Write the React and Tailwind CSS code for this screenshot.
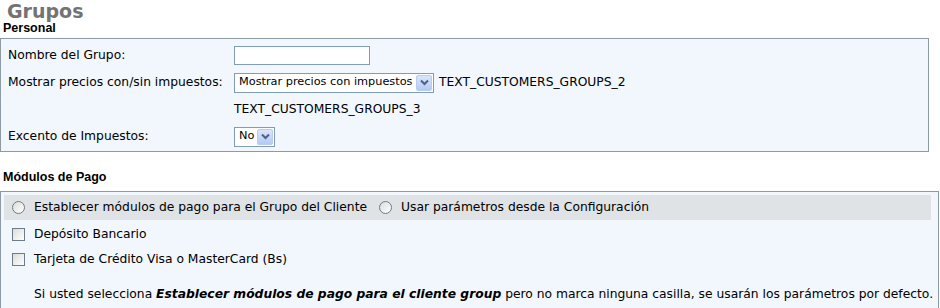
import React from "react";

function XpSelect({ value, width }) {
  return (
    <div
      className={`flex h-[20px] items-stretch border border-[#7f9db9] bg-white text-[11.3px] ${width}`}
    >
      <span className="flex flex-1 items-center pl-[4px] whitespace-nowrap">{value}</span>
      <span className="m-[1px] flex w-[16px] items-center justify-center rounded-[2px] border border-[#b9cbf0] bg-gradient-to-b from-[#dbe5fb] to-[#b5c9f5]">
        <svg width="9" height="7" viewBox="0 0 9 7">
          <path d="M1 1.5 L4.5 5 L8 1.5" fill="none" stroke="#4d6185" strokeWidth="2" />
        </svg>
      </span>
    </div>
  );
}

function Radio() {
  return (
    <span className="inline-block h-[13px] w-[13px] shrink-0 rounded-full border border-[#6b7c8c] bg-gradient-to-br from-[#dcdcd7] to-white" />
  );
}

function Check() {
  return (
    <span className="inline-block h-[13px] w-[13px] shrink-0 border border-[#6b7c8c] bg-gradient-to-br from-[#dcdcd7] to-white" />
  );
}

export default function App() {
  return (
    <div className="h-[308px] w-[940px] overflow-hidden bg-white text-[12.3px] text-black [font-family:'DejaVu_Sans',Verdana,sans-serif]">
      <h1 className="h-[21px] pt-[1px] pl-[7px] text-[19px] leading-[20px] font-bold text-[#737373]">Grupos</h1>
      <div className="h-[17px] pl-[3px] text-[12.5px] leading-[14px] font-bold [font-family:'Liberation_Sans',Arial,sans-serif]">
        Personal
      </div>

      <div className="w-[929px] border border-[#8b9aa4] bg-[#f1f7fd] pt-[3px] pb-[1px]">
        <div className="flex h-[27px] items-center">
          <span className="w-[233px] pl-[7px]">Nombre del Grupo:</span>
          <span className="h-[19px] w-[136px] border border-[#7f9db9] bg-white" />
        </div>
        <div className="flex h-[27px] items-center">
          <span className="w-[233px] pl-[7px] whitespace-nowrap">Mostrar precios con/sin impuestos:</span>
          <XpSelect value="Mostrar precios con impuestos" width="w-[200px]" />
          <span className="pl-[5px]">TEXT_CUSTOMERS_GROUPS_2</span>
        </div>
        <div className="flex h-[27px] items-center">
          <span className="w-[233px]" />
          <span>TEXT_CUSTOMERS_GROUPS_3</span>
        </div>
        <div className="flex h-[27px] items-center">
          <span className="w-[233px] pl-[7px]">Excento de Impuestos:</span>
          <XpSelect value="No" width="w-[41px]" />
        </div>
      </div>

      <div className="flex h-[39px] items-end pb-[4px] pl-[3px] text-[12.5px] font-bold [font-family:'Liberation_Sans',Arial,sans-serif]">
        Módulos de Pago
      </div>

      <div className="h-[130px] w-[939px] border border-[#8b9aa4] bg-[#f1f7fd] pt-[3px] pr-[7px] pl-[3px]">
        <div className="flex h-[25px] items-center bg-[#dfe3e6] pl-[8px] whitespace-nowrap">
          <Radio />
          <span className="pl-[9px] pr-[12px]">Establecer módulos de pago para el Grupo del Cliente</span>
          <Radio />
          <span className="pl-[9px]">Usar parámetros desde la Configuración</span>
        </div>
        <div className="flex h-[26px] items-center gap-[9px] pl-[8px] pt-[2px]">
          <Check />
          <span>Depósito Bancario</span>
        </div>
        <div className="flex h-[26px] items-center gap-[9px] pl-[8px]">
          <Check />
          <span>Tarjeta de Crédito Visa o MasterCard (Bs)</span>
        </div>
        <div className="flex h-[36px] items-center pl-[30px] pt-[8px] whitespace-nowrap">
          <span>
            Si usted selecciona <b><i>Establecer módulos de pago para el cliente group</i></b> pero no marca ninguna casilla, se usarán los parámetros por defecto.
          </span>
        </div>
      </div>
    </div>
  );
}
